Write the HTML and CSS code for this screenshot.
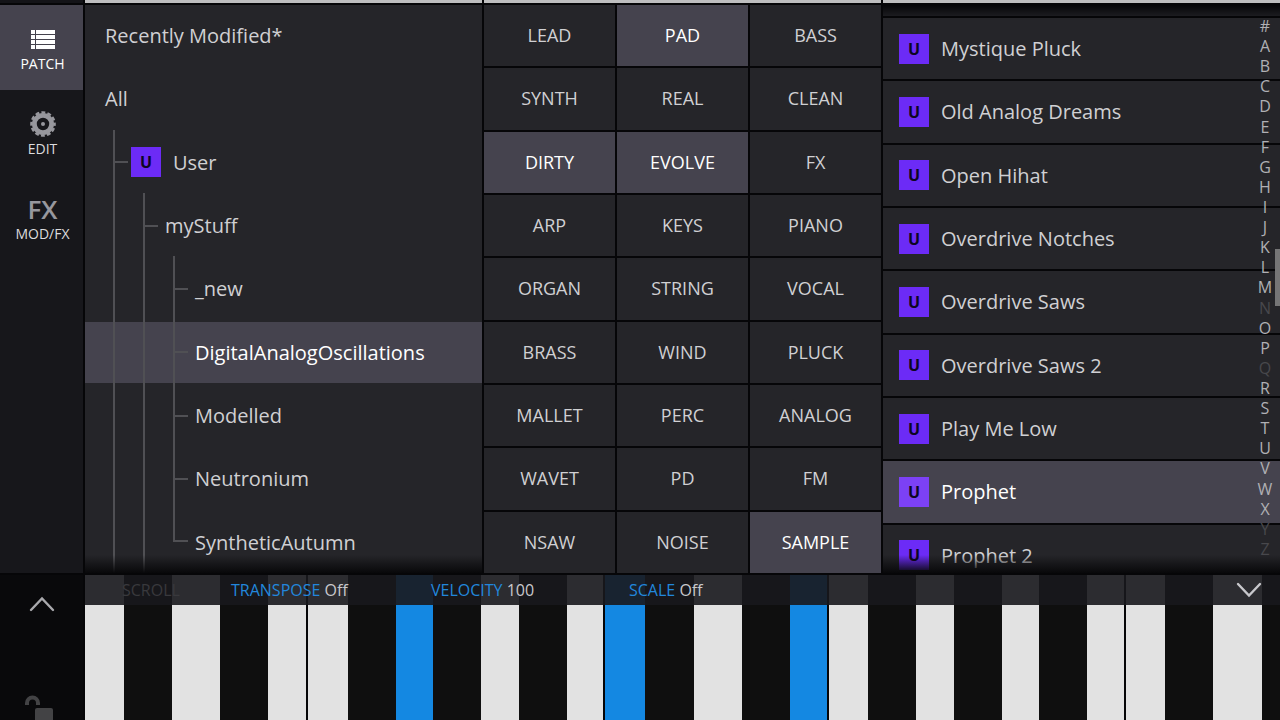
FILE: index.html
```html
<!DOCTYPE html>
<html lang="en">
<head>
  <meta charset="UTF-8">
  <meta name="viewport" content="width=device-width, initial-scale=1.0">
  <title>Patch Browser</title>
  <link rel="stylesheet" href="styles.css">
</head>
<body>
  <div class="strip"></div>
  <div class="strip light"></div>
  <div class="strip light"></div>
  <div class="strip light"></div>

  <nav class="sidebar">
    <button class="tab active">
      <svg width="24" height="20" viewBox="0 0 24 20" fill="currentColor">
        <path d="M0 0h4v4H0zM5 0h19v4H5zM0 5h4v4H0zM5 5h19v4H5zM0 10h4v4H0zM5 10h19v4H5zM0 15h4v4H0zM5 15h19v4H5z"/>
      </svg>
      <span>PATCH</span>
    </button>
    <button class="tab">
      <svg class="gear" width="26" height="26" viewBox="-13 -13 26 26">
        <circle r="8.6" fill="none" stroke="currentColor" stroke-width="4.8"/>
        <circle r="11.6" fill="none" stroke="currentColor" stroke-width="2.4" stroke-dasharray="3.9 2.174" stroke-dashoffset="1.95"/>
        <circle r="2" fill="currentColor"/>
      </svg>
      <span>EDIT</span>
    </button>
    <button class="tab">
      <b class="fx">FX</b>
      <span>MOD/FX</span>
    </button>
  </nav>

  <section class="panel tree">
    <button class="row root">Recently Modified*</button>
    <button class="row root">All</button>
    <button class="row"><i class="guide branch to-badge"></i><span class="badge">U</span><span class="name">User</span></button>
    <button class="row"><i class="guide"></i><i class="guide branch"></i>myStuff</button>
    <button class="row"><i class="guide"></i><i class="guide"></i><i class="guide branch"></i>_new</button>
    <button class="row active"><i class="guide"></i><i class="guide"></i><i class="guide branch"></i>DigitalAnalogOscillations</button>
    <button class="row"><i class="guide"></i><i class="guide"></i><i class="guide branch"></i>Modelled</button>
    <button class="row"><i class="guide"></i><i class="guide"></i><i class="guide branch"></i>Neutronium</button>
    <button class="row"><i class="guide"></i><i class="guide"></i><i class="guide branch last"></i>SyntheticAutumn</button>
  </section>

  <section class="tags">
    <button>LEAD</button>
    <button class="active">PAD</button>
    <button>BASS</button>
    <button>SYNTH</button>
    <button>REAL</button>
    <button>CLEAN</button>
    <button class="active">DIRTY</button>
    <button class="active">EVOLVE</button>
    <button>FX</button>
    <button>ARP</button>
    <button>KEYS</button>
    <button>PIANO</button>
    <button>ORGAN</button>
    <button>STRING</button>
    <button>VOCAL</button>
    <button>BRASS</button>
    <button>WIND</button>
    <button>PLUCK</button>
    <button>MALLET</button>
    <button>PERC</button>
    <button>ANALOG</button>
    <button>WAVET</button>
    <button>PD</button>
    <button>FM</button>
    <button>NSAW</button>
    <button>NOISE</button>
    <button class="active">SAMPLE</button>
  </section>

  <section class="panel patches">
    <div class="list">
      <div class="cut"></div>
      <button class="patch"><span class="badge">U</span>Mystique Pluck</button>
      <button class="patch"><span class="badge">U</span>Old Analog Dreams</button>
      <button class="patch"><span class="badge">U</span>Open Hihat</button>
      <button class="patch"><span class="badge">U</span>Overdrive Notches</button>
      <button class="patch"><span class="badge">U</span>Overdrive Saws</button>
      <button class="patch"><span class="badge">U</span>Overdrive Saws 2</button>
      <button class="patch"><span class="badge">U</span>Play Me Low</button>
      <button class="patch active"><span class="badge">U</span>Prophet</button>
      <button class="patch"><span class="badge">U</span>Prophet 2</button>
    </div>
    <nav class="letters">
      <a href="#">#</a><a href="#">A</a><a href="#">B</a><a href="#">C</a><a href="#">D</a><a href="#">E</a><a href="#">F</a>
      <a href="#">G</a><a href="#">H</a><a href="#">I</a><a href="#">J</a><a href="#">K</a><a href="#">L</a><a href="#">M</a>
      <a href="#" class="off">N</a><a href="#">O</a><a href="#">P</a><a href="#" class="off">Q</a><a href="#">R</a><a href="#">S</a>
      <a href="#">T</a><a href="#">U</a><a href="#">V</a><a href="#">W</a><a href="#">X</a><a href="#" class="off">Y</a><a href="#" class="off">Z</a>
    </nav>
    <div class="thumb"></div>
  </section>

  <div class="corner">
    <button aria-label="Expand">
      <svg width="26" height="16" viewBox="0 0 26 16" fill="none" stroke="#a9a9ad" stroke-width="2.4" stroke-linecap="round"><path d="M2 14L13 2.5L24 14"/></svg>
    </button>
    <button aria-label="Unlock">
      <svg width="30" height="26" viewBox="0 0 30 26"><path d="M3 11V9a5.500 5.500 0 0 1 11 0v2" fill="none" stroke="#434345" stroke-width="4"/><rect x="11" y="14" width="18" height="18" rx="2" fill="#434345"/></svg>
    </button>
  </div>

  <section class="keyboard">
    <div class="keys">
      <button class="white"></button><button></button><button class="white"></button><button></button><button class="white"></button>
      <button class="white split"></button><button></button><button class="white held"></button><button></button><button class="white"></button><button></button><button class="white"></button>
      <button class="white held split"></button><button></button><button class="white"></button><button></button><button class="white held"></button>
      <button class="white split"></button><button></button><button class="white"></button><button></button><button class="white"></button><button></button><button class="white"></button>
      <button class="white split"></button><button></button><button class="white"></button><button></button>
    </div>
    <div class="options">
      <button class="off">SCROLL</button>
      <button>TRANSPOSE <span>Off</span></button>
      <button>VELOCITY <span>100</span></button>
      <button>SCALE <span>Off</span></button>
      <button class="collapse" aria-label="Collapse">
        <svg width="26" height="16" viewBox="0 0 26 16" fill="none" stroke="#c8c8cc" stroke-width="2.4" stroke-linecap="round"><path d="M2 2L13 13.500L24 2"/></svg>
      </button>
    </div>
  </section>
</body>
</html>
```
FILE: styles.css
```css
* { box-sizing: border-box; }
body { margin: 0; height: 100vh; overflow: hidden; display: grid; grid-template-columns: 83px 1fr 1fr 1fr; grid-template-rows: 3px 1fr 145px; gap: 2px; background: #060608; color: #d0d0d3; font-family: "Open Sans", "Noto Sans", sans-serif; font-size: 20px; }
button { margin: 0; padding: 0; border: 0; background: none; color: inherit; font: inherit; cursor: pointer; }
a { color: inherit; text-decoration: none; }

.strip { background: #141418; }
.strip.light { background: #bebebf; }

.sidebar { background: #17171b; }
.tab { display: flex; flex-direction: column; align-items: center; justify-content: flex-end; gap: 4px; width: 100%; height: 85px; padding: 0 0 16px 2px; font-size: 14px; line-height: 20px; color: #dcdcde; }
.tab.active { background: #45434e; color: #fff; }
.tab .gear, .fx { color: #97979d; }
.tab .gear { margin-bottom: -2px; }
.fx { font-size: 26px; line-height: 26px; font-weight: 600; margin-bottom: -2px; }

.panel { position: relative; overflow: hidden; background: #252529; min-height: 0; }
.panel::after { content: ""; position: absolute; left: 0; right: 0; bottom: 0; height: 18px; background: linear-gradient(transparent, #08080a); pointer-events: none; }
.active { background: #45434e; color: #fff; }

.tree { display: grid; grid-template-rows: repeat(9, 1fr); gap: 2px; }
.row { display: flex; align-items: center; min-height: 0; padding-left: 28px; text-align: left; }
.row.root { padding-left: 20px; }
.guide { position: relative; align-self: stretch; width: 30px; margin-top: -2px; border-left: 2px solid #505054; }
.guide.branch { width: 22px; }
.guide.to-badge { width: 18px; }
.guide.branch::after { content: ""; position: absolute; left: 0; top: 50%; width: 13px; height: 2px; background: #505054; }
.guide.last { align-self: flex-start; height: 50%; }
.guide.last::after { top: 100%; left: -2px; width: 15px; }
.badge { display: flex; align-items: center; justify-content: center; width: 30px; height: 30px; margin-right: 12px; background: #6c2bf6; color: #0d0622; font-size: 16px; font-weight: 700; }
.active .badge { background: #7c41f5; }

.tags { display: grid; grid-template-columns: repeat(3, 1fr); grid-template-rows: repeat(9, 1fr); gap: 2px; font-size: 18px; }
.tags button { background: #252529; padding-bottom: 1px; }
.tags .active { background: #45434e; }

.list { display: grid; grid-template-rows: 11px; grid-auto-rows: calc((100% - 16px) / 9); gap: 2px; height: 100%; background: #060608; }
.cut { background: linear-gradient(#060608, #1c1c20); }
.patch { display: flex; align-items: center; padding-left: 16px; background: #252529; text-align: left; }
.patch.active { background: #45434e; }
.letters { position: absolute; top: 11px; right: 5px; bottom: 14px; width: 20px; display: flex; flex-direction: column; font-size: 16px; line-height: 20px; text-align: center; color: #b0b0b4; }
.letters a { flex: 1; }
.letters .off { color: #48484c; }
.thumb { position: absolute; right: 0; top: 43%; width: 5px; height: 10%; background: #757576; }

.corner { display: flex; flex-direction: column; align-items: center; justify-content: space-between; padding-top: 21px; overflow: hidden; background: #09090b; }
.corner button { display: flex; }
.corner button:last-child { margin-right: 6px; }

.keyboard { position: relative; grid-column: 2 / 5; overflow: hidden; }
.keys { display: grid; height: 100%; grid-template-columns: 39fr 48fr 48fr 48fr 38fr 42fr 48fr 37fr 48fr 38fr 48fr 36fr 42fr 49fr 48fr 48fr 37fr 41fr 48fr 38fr 48fr 37fr 48fr 37fr 41fr 48fr 49fr 18fr; }
.keys button { background: #0f0f0f; }
.keys .white { background: #e2e2e2; }
.keys .held { background: #1488e2; }
.keys .split { border-left: 2px solid #060608; }
.options { position: absolute; top: 0; left: 0; right: 0; height: 30px; display: grid; grid-template-columns: 109fr 200fr 198fr 400fr 251fr; align-items: center; padding-left: 37px; background: rgba(24, 24, 29, 0.9); font-size: 16px; line-height: 28px; color: #2287dc; }
.options button { text-align: left; white-space: nowrap; }
.options span { color: #c8c8cc; }
.options .off { color: #39393d; }
.options .collapse { display: flex; justify-self: end; margin-right: 18px; }
```
